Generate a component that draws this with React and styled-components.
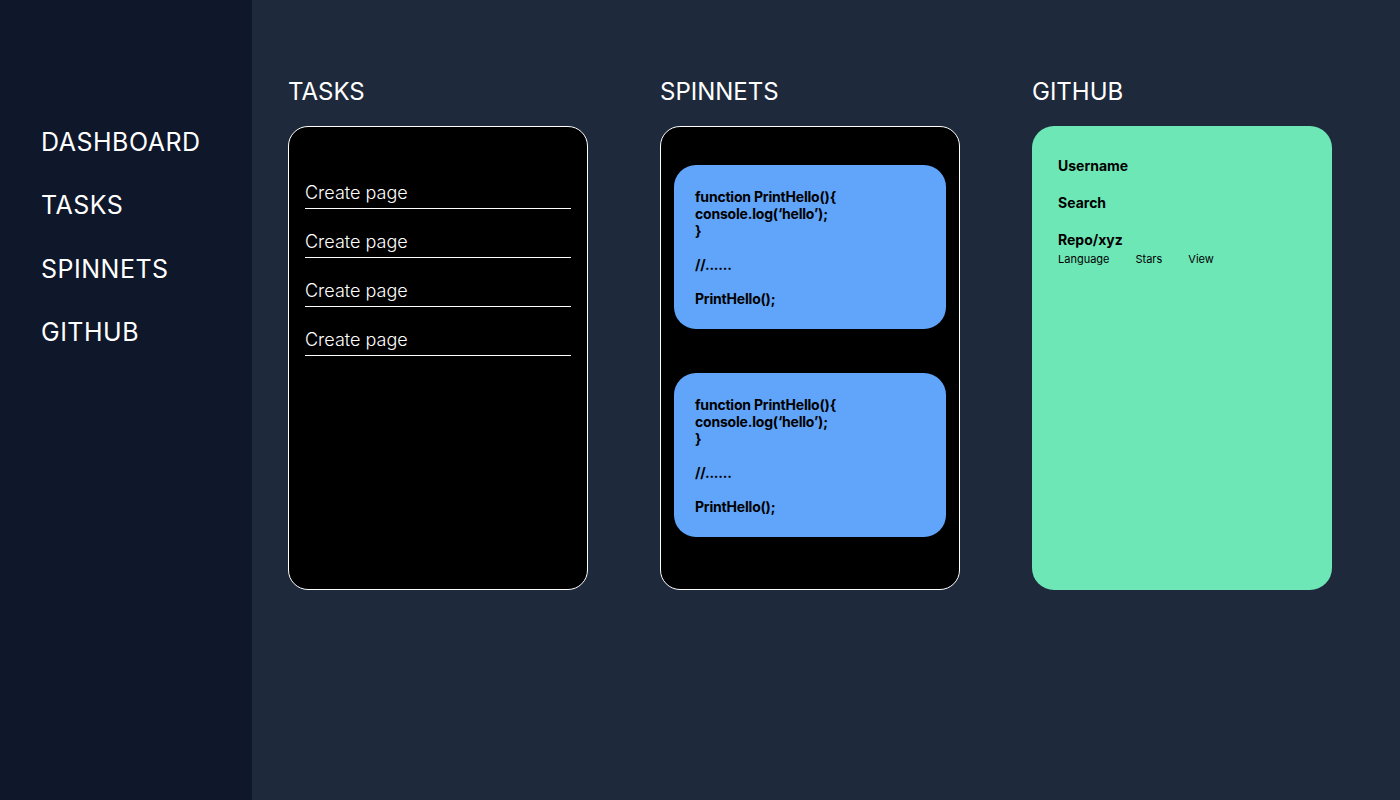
import styled, { createGlobalStyle } from 'styled-components';

const GlobalStyle = createGlobalStyle`
  body {
    margin: 0;
    font-family: Inter, "Noto Sans", sans-serif;
    background: #1e293b;
  }
`;

const NAV = ['DASHBOARD', 'TASKS', 'SPINNETS', 'GITHUB'];
const TASKS = ['Create page', 'Create page', 'Create page', 'Create page'];
const SNIPPETS = [1, 2];

const App = () => {
  return (
    <Layout>
      <GlobalStyle />
      <Sidebar>
        {NAV.map((item) => (
          <NavItem key={item}>{item}</NavItem>
        ))}
      </Sidebar>
      <Main>
        <Column>
          <Heading>TASKS</Heading>
          <DarkCard>
            <TaskList>
              {TASKS.map((task, i) => (
                <TaskItem key={i}>{task}</TaskItem>
              ))}
            </TaskList>
          </DarkCard>
        </Column>
        <Column>
          <Heading>SPINNETS</Heading>
          <DarkCard>
            <SnippetList>
              {SNIPPETS.map((n) => (
                <Snippet key={n}>
                  <CodeLine>function PrintHello(){'{'}</CodeLine>
                  <CodeLine>console.log(‘hello’);</CodeLine>
                  <CodeLine>{'}'}</CodeLine>
                  <CodeLine>&nbsp;</CodeLine>
                  <CodeLine>//......</CodeLine>
                  <CodeLine>&nbsp;</CodeLine>
                  <CodeLine>PrintHello();</CodeLine>
                </Snippet>
              ))}
            </SnippetList>
          </DarkCard>
        </Column>
        <Column>
          <Heading>GITHUB</Heading>
          <GithubCard>
            <Label>Username</Label>
            <Label>Search</Label>
            <Repo>
              <Label>Repo/xyz</Label>
              <RepoMeta>
                <span>Language</span>
                <span>Stars</span>
                <span>View</span>
              </RepoMeta>
            </Repo>
          </GithubCard>
        </Column>
      </Main>
    </Layout>
  );
};

const Layout = styled.div`
  display: flex;
  min-height: 800px;
`;

const Sidebar = styled.nav`
  width: 252px;
  flex-shrink: 0;
  background: #0f172a;
  padding: 127px 0 0 41px;
  box-sizing: border-box;
  display: flex;
  flex-direction: column;
  gap: 33.3px;
`;

const NavItem = styled.div`
  color: #ffffff;
  font-size: 25px;
  line-height: 30px;
  font-weight: 400;
  letter-spacing: 0.5px;
`;

const Main = styled.main`
  flex: 1;
  display: flex;
  gap: 72px;
  padding: 77px 0 0 36px;
`;

const Column = styled.section`
  width: 300px;
  display: flex;
  flex-direction: column;
`;

const Heading = styled.h2`
  margin: 0 0 20px;
  color: #ffffff;
  font-size: 24px;
  line-height: 29px;
  font-weight: 400;
`;

const DarkCard = styled.div`
  height: 464px;
  box-sizing: border-box;
  background: #000000;
  border: 1px solid #ffffff;
  border-radius: 20px;
`;

const TaskList = styled.ul`
  list-style: none;
  margin: 0;
  padding: 55px 16px 0;
  display: flex;
  flex-direction: column;
  gap: 22px;
`;

const TaskItem = styled.li`
  color: #ffffff;
  font-size: 18px;
  line-height: 22px;
  font-weight: 300;
  padding-bottom: 4px;
  border-bottom: 1px solid #ffffff;
`;

const SnippetList = styled.div`
  padding: 38px 13px 0;
  display: flex;
  flex-direction: column;
  gap: 44px;
`;

const Snippet = styled.div`
  height: 164px;
  box-sizing: border-box;
  background: #60a5fa;
  border-radius: 22px;
  padding: 23px 21px;
`;

const CodeLine = styled.div`
  color: #000000;
  font-size: 14px;
  line-height: 17px;
  font-weight: 700;
  letter-spacing: -0.2px;
`;

const GithubCard = styled.div`
  height: 464px;
  box-sizing: border-box;
  background: #6ee7b7;
  border-radius: 22px;
  padding: 31px 26px;
  display: flex;
  flex-direction: column;
  gap: 20px;
`;

const Label = styled.div`
  color: #000000;
  font-size: 14px;
  line-height: 17px;
  font-weight: 700;
`;

const Repo = styled.div`
  display: flex;
  flex-direction: column;
  gap: 4px;
`;

const RepoMeta = styled.div`
  display: flex;
  gap: 26px;
  font-size: 11px;
  line-height: 14px;
  color: #000000;
`;

export default App;
